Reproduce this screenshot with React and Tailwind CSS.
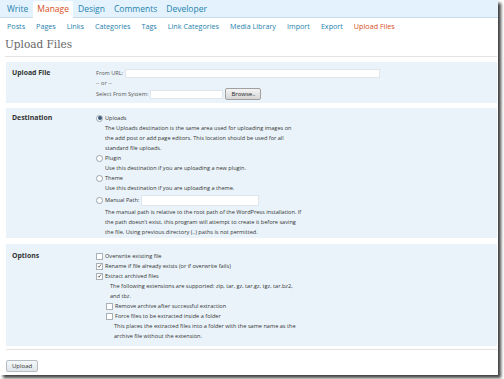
import React from 'react';

const tabs = ['Write', 'Manage', 'Design', 'Comments', 'Developer'];
const subs = ['Posts', 'Pages', 'Links', 'Categories', 'Tags', 'Link Categories', 'Media Library', 'Import', 'Export', 'Upload Files'];

function Radio({ checked }) {
  return (
    <span className="inline-flex w-[7px] h-[7px] rounded-full border border-[#9aa5ad] bg-white items-center justify-center mr-[2px] shrink-0">
      {checked && <span className="w-[4px] h-[4px] rounded-full bg-[#3d5a78]" />}
    </span>
  );
}

function Check({ checked }) {
  return (
    <span className="inline-flex w-[7px] h-[7px] border border-[#a9b0b6] bg-white items-center justify-center mr-[2px] shrink-0">
      {checked && (
        <svg viewBox="0 0 8 8" className="w-[6px] h-[6px]">
          <path d="M1.5 4.2 L3.2 6 L6.5 1.5" stroke="#333" strokeWidth="1.1" fill="none" />
        </svg>
      )}
    </span>
  );
}

function Line({ children, className = '' }) {
  return <div className={`h-[10px] leading-[10px] flex items-center whitespace-nowrap ${className}`}>{children}</div>;
}

function Section({ label, className = '', children }) {
  return (
    <div className={`bg-[#eaf3fa] flex ${className}`}>
      <div className="w-[90px] pl-[6px] text-[6.9px] font-bold text-[#333] leading-[10px]">{label}</div>
      <div className="flex-1 text-[5.6px] text-[#333]">{children}</div>
    </div>
  );
}

export default function App() {
  return (
    <div className="w-[504px] h-[379px] bg-white font-['Open_Sans',sans-serif]">
      <div className="w-[498px] h-[375px] bg-white shadow-[3px_3px_3px_rgba(0,0,0,0.75)] overflow-hidden flex flex-col">
        <div className="h-[18px] bg-[#e4f2fd] border-b border-[#c9dcea] flex items-end pl-[3px] gap-[1px] shrink-0">
          {tabs.map(t => (
            <div
              key={t}
              className={`px-[4px] h-[16px] leading-[15px] text-[8.5px] rounded-t-[2px] ${t === 'Manage' ? 'bg-white text-[#d54e21] mb-[-1px] h-[17px]' : 'text-[#2583ad]'}`}
            >
              {t}
            </div>
          ))}
        </div>
        <div className="h-[17px] flex items-center pl-[7px] gap-[11px] text-[7.2px] shrink-0">
          {subs.map(s => (
            <span key={s} className={s === 'Upload Files' ? 'text-[#d54e21]' : 'text-[#2583ad]'}>{s}</span>
          ))}
        </div>
        <div className="h-[20px] pl-[5px] flex items-center font-['DejaVu_Serif',serif] text-[10.5px] text-[#666] shrink-0">
          Upload Files
        </div>
        <div className="ml-[5px] mr-[1px] mt-[1px] border-t border-[#e3e3e3]" />

        <div className="ml-[6px] mr-[1px] mt-[5px] flex flex-col">
          <Section label="Upload File" className="pt-[6px] pb-[3px]">
            <Line className="text-[#555]">
              From URL:
              <span className="ml-[2px] w-[255px] h-[9px] bg-white border border-[#dfe6ec]" />
            </Line>
            <Line className="text-[#555]">-- or --</Line>
            <div className="h-[12px] flex items-center text-[#555] whitespace-nowrap">
              Select From System:
              <span className="ml-[2px] w-[73px] h-[9px] bg-white border border-[#dfe6ec]" />
              <span className="ml-[2px] h-[12px] px-[5px] flex items-center rounded-[2px] border border-[#a0a0a0] bg-gradient-to-b from-[#f4f4f4] to-[#d6d6d6] text-[#222] text-[6px]">Browse..</span>
            </div>
          </Section>

          <Section label="Destination" className="mt-[5px] pt-[5px] pb-[1px]">
            <Line><Radio checked />Uploads</Line>
            <div className="pl-[9px]">
              <Line>The Uploads destination is the same area used for uploading images on</Line>
              <Line>the add post or add page editors. This location should be used for all</Line>
              <Line>standard file uploads.</Line>
            </div>
            <Line><Radio />Plugin</Line>
            <Line className="pl-[9px]">Use this destination if you are uploading a new plugin.</Line>
            <Line><Radio />Theme</Line>
            <Line className="pl-[9px]">Use this destination if you are uploading a theme.</Line>
            <div className="h-[14px] flex items-center whitespace-nowrap">
              <Radio />Manual Path:
              <span className="ml-[2px] w-[118px] h-[11px] bg-white border border-[#dfe6ec]" />
            </div>
            <div className="pl-[9px]">
              <Line>The manual path is relative to the root path of the WordPress installation. If</Line>
              <Line>the path doesn&rsquo;t exist, this program will attempt to create it before saving</Line>
              <Line>the file. Using previous directory (..) paths is not permitted.</Line>
            </div>
          </Section>

          <Section label="Options" className="mt-[6px] pt-[7px] pb-[5px]">
            <Line><Check />Overwrite existing file</Line>
            <Line><Check checked />Rename if file already exists (or if overwrite fails)</Line>
            <Line><Check checked />Extract archived files</Line>
            <div className="pl-[14px]">
              <Line>The following extensions are supported: zip, tar, gz, tar.gz, tgz, tar.bz2,</Line>
              <Line>and tbz.</Line>
            </div>
            <div className="pl-[10px]">
              <Line><Check />Remove archive after successful extraction</Line>
              <Line><Check />Force files to be extracted inside a folder</Line>
              <div className="pl-[8px]">
                <Line>This places the extracted files into a folder with the same name as the</Line>
                <Line>archive file without the extension.</Line>
              </div>
            </div>
          </Section>
        </div>

        <div className="ml-[6px] mr-[1px] mt-[3px] border-t border-[#e3e3e3]" />
        <div className="ml-[6px] mt-[10px] flex">
          <div className="h-[12px] px-[5px] flex items-center rounded-[2px] border border-[#b5bcc2] bg-gradient-to-b from-[#f5f8fa] to-[#dfe5ea] text-[#333] text-[6px]">Upload</div>
        </div>
      </div>
    </div>
  );
}
